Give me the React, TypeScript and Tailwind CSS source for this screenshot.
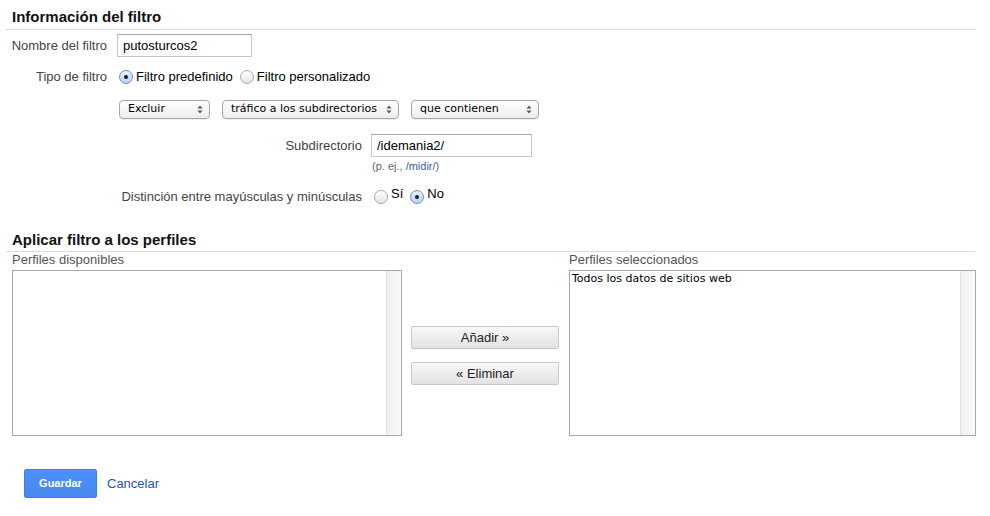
import React, { useState } from 'react';

const ui = { fontFamily: '"Liberation Sans", Arial, sans-serif' };
const mac = { fontFamily: '"DejaVu Sans", Verdana, sans-serif' };

function Radio({ checked, onClick }: { checked: boolean; onClick: () => void }) {
  return (
    <span
      onClick={onClick}
      className={
        'inline-flex items-center justify-center size-[14px] rounded-full border cursor-pointer shrink-0 ' +
        (checked
          ? 'border-[#6d8fc0] bg-[linear-gradient(#e8f1fc,#b9d2f0)]'
          : 'border-[#a9a9a9] bg-[linear-gradient(#ffffff,#e4e4e4)]')
      }
    >
      {checked && <span className="size-[4px] rounded-full bg-[#1a1a1a]" />}
    </span>
  );
}

function Select({ label, width }: { label: string; width: string }) {
  return (
    <div
      style={mac}
      className={`${width} h-[19px] flex items-center justify-between pl-[8px] pr-[6px] text-[11px] text-black border border-[#a6a6a6] rounded-[4px] bg-[linear-gradient(#ffffff,#ededed)] shadow-[0_1px_0_rgba(0,0,0,0.06)]`}
    >
      <span>{label}</span>
      <svg width="6" height="9" viewBox="0 0 6 9">
        <path d="M3 0.5 L5.5 3.5 H0.5 Z M3 8.5 L0.5 5.5 H5.5 Z" fill="#555" />
      </svg>
    </div>
  );
}

function ListBox({ width, items }: { width: string; items: string[] }) {
  return (
    <div className={`${width} h-[166px] border border-[#a8a8a8] flex bg-white`}>
      <div style={mac} className="flex-1 pl-[2px] pt-[1px] text-[11px] leading-[14px] text-black">
        {items.map((i) => (
          <div key={i}>{i}</div>
        ))}
      </div>
      <div className="w-[15px] border-l border-[#e3e3e3] bg-[linear-gradient(90deg,#f0f0f0,#fafafa)]" />
    </div>
  );
}

export default function App() {
  const [tipo, setTipo] = useState<'pre' | 'custom'>('pre');
  const [caso, setCaso] = useState<'si' | 'no'>('no');

  return (
    <div style={ui} className="w-[990px] h-[516px] bg-white text-[13px] text-[#444] overflow-hidden">
      {/* Información del filtro */}
      <div className="w-[969px] ml-[6px] h-[30px] pt-[8px] pl-[6px] border-b border-[#dcdcdc]">
        <h2 className="text-[15px] leading-[18px] font-bold text-[#111]">Información del filtro</h2>
      </div>

      <div className="flex items-center mt-[4px] h-[23px]">
        <div className="w-[107px] text-right whitespace-nowrap">Nombre del filtro</div>
        <input
          defaultValue="putosturcos2"
          className="ml-[10px] w-[135px] h-[23px] px-[5px] border border-[#c6c6c6] border-t-[#a8a8a8] text-[13px] text-black outline-none"
        />
      </div>

      <div className="flex items-center mt-[10px] h-[20px]">
        <div className="w-[107px] text-right whitespace-nowrap">Tipo de filtro</div>
        <div className="ml-[12px] flex items-center gap-[3px] text-black">
          <Radio checked={tipo === 'pre'} onClick={() => setTipo('pre')} />
          <span>Filtro predefinido</span>
          <span className="ml-[1px]" />
          <Radio checked={tipo === 'custom'} onClick={() => setTipo('custom')} />
          <span>Filtro personalizado</span>
        </div>
      </div>

      <div className="flex items-center mt-[13px] ml-[119px] gap-[12px]">
        <Select label="Excluir" width="w-[91px]" />
        <Select label="tráfico a los subdirectorios" width="w-[177px]" />
        <Select label="que contienen" width="w-[128px]" />
      </div>

      <div className="flex items-center mt-[15px] h-[23px]">
        <div className="w-[362px] text-right">Subdirectorio</div>
        <input
          defaultValue="/idemania2/"
          className="ml-[9px] w-[161px] h-[23px] px-[5px] border border-[#c6c6c6] border-t-[#a8a8a8] text-[13px] text-black outline-none"
        />
      </div>
      <div className="ml-[372px] mt-[3px] text-[11px] leading-[13px] text-[#666]">
        (p. ej., <span className="text-[#3a5f9a]">/midir/</span>)
      </div>

      <div className="flex items-center mt-[14px] h-[20px]">
        <div className="w-[362px] text-right">Distinción entre mayúsculas y minúsculas</div>
        <div className="ml-[12px] flex items-center gap-[3px] text-black">
          <Radio checked={caso === 'si'} onClick={() => setCaso('si')} />
          <span className="-mt-[6px]">Sí</span>
          <span className="ml-[1px]" />
          <Radio checked={caso === 'no'} onClick={() => setCaso('no')} />
          <span className="-mt-[6px]">No</span>
        </div>
      </div>

      {/* Aplicar filtro a los perfiles */}
      <div className="w-[969px] ml-[6px] mt-[24px] pl-[6px] pb-[2px] border-b border-[#dcdcdc]">
        <h2 className="text-[15px] leading-[18px] font-bold text-[#111]">Aplicar filtro a los perfiles</h2>
      </div>

      <div className="flex ml-[12px]">
        <div className="flex flex-col">
          <div className="leading-[15px] text-[#555]">Perfiles disponibles</div>
          <div className="mt-[3px]">
            <ListBox width="w-[390px]" items={[]} />
          </div>
        </div>

        <div className="flex flex-col ml-[9px] mt-[74px] gap-[13px]">
          {['Añadir »', '« Eliminar'].map((t) => (
            <button
              key={t}
              className="w-[148px] h-[23px] border border-[#c8c8c8] rounded-[2px] bg-[linear-gradient(#f8f8f8,#e2e2e2)] text-[13px] text-[#222]"
            >
              {t}
            </button>
          ))}
        </div>

        <div className="flex flex-col ml-[10px]">
          <div className="leading-[15px] text-[#555]">Perfiles seleccionados</div>
          <div className="mt-[3px]">
            <ListBox width="w-[407px]" items={['Todos los datos de sitios web']} />
          </div>
        </div>
      </div>

      <div className="flex items-center ml-[24px] mt-[33px] gap-[10px]">
        <button className="w-[73px] h-[29px] rounded-[2px] border border-[#3b7fe8] bg-[linear-gradient(#4d90fe,#4787ed)] text-white text-[11px] font-bold">
          Guardar
        </button>
        <a href="#" className="text-[13px] text-[#1f55a6]">
          Cancelar
        </a>
      </div>
    </div>
  );
}
